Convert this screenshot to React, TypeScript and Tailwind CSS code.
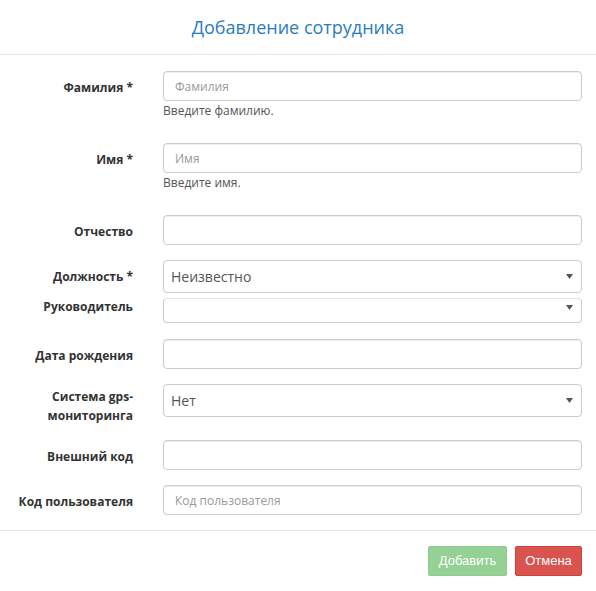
import React from "react";

function Caret() {
  return (
    <svg width="7" height="5" viewBox="0 0 7 5" className="shrink-0">
      <path d="M0 0 L7 0 L3.5 5 Z" fill="#555" />
    </svg>
  );
}

function Label({ children, pad = "pt-[7px]" }: { children: React.ReactNode; pad?: string }) {
  return (
    <div
      className={`w-[148px] shrink-0 pr-[15px] text-right text-[12px] leading-[19px] font-bold text-[#333] ${pad}`}
    >
      {children}
    </div>
  );
}

function TextInput({ placeholder }: { placeholder?: string }) {
  return (
    <input
      type="text"
      placeholder={placeholder}
      className="block w-full h-[30px] px-[11px] rounded-[4px] border border-[#ccc] bg-white text-[12px] text-[#555] outline-none shadow-[inset_0_1px_1px_rgba(0,0,0,0.075)] placeholder:text-[#999]"
    />
  );
}

function Select({ value, h = "h-[33px]", align = "items-center" }: { value?: string; h?: string; align?: string }) {
  return (
    <div
      className={`flex ${align} justify-between w-full ${h} pl-[7px] pr-[8px] rounded-[4px] border border-[#ccc] bg-white text-[14px] text-[#555]`}
    >
      <span>{value}</span>
      <Caret />
    </div>
  );
}

export default function App() {
  return (
    <div className="w-[596px] h-[591px] bg-white font-['Open_Sans',sans-serif]">
      <div className="h-[55px] flex items-center justify-center border-b border-[#e5e5e5]">
        <h4 className="text-[18px] text-[#2b7bc3]">Добавление сотрудника</h4>
      </div>

      <div className="pt-[16px]">
        <div className="flex mb-[24px]">
          <Label>Фамилия *</Label>
          <div className="flex-1 pl-[15px] pr-[14px]">
            <TextInput placeholder="Фамилия" />
            <p className="mt-[1px] text-[12px] leading-[17px] text-[#555]">Введите фамилию.</p>
          </div>
        </div>

        <div className="flex mb-[24px]">
          <Label>Имя *</Label>
          <div className="flex-1 pl-[15px] pr-[14px]">
            <TextInput placeholder="Имя" />
            <p className="mt-[1px] text-[12px] leading-[17px] text-[#555]">Введите имя.</p>
          </div>
        </div>

        <div className="flex mb-[15px]">
          <Label>Отчество</Label>
          <div className="flex-1 pl-[15px] pr-[14px]">
            <TextInput />
          </div>
        </div>

        <div className="flex">
          <Label>Должность *</Label>
          <div className="flex-1 pl-[15px] pr-[14px]">
            <Select value="Неизвестно" />
          </div>
        </div>

        <div className="flex mb-[16px]">
          <Label pad="pt-[4px]">Руководитель</Label>
          <div className="flex-1 pl-[15px] pr-[14px] pt-[5px]">
            <Select h="h-[25px] pt-[6px] border-t-[#e3e3e3]" align="items-start" />
          </div>
        </div>

        <div className="flex mb-[15px]">
          <Label>Дата рождения</Label>
          <div className="flex-1 pl-[15px] pr-[14px]">
            <TextInput />
          </div>
        </div>

        <div className="flex mb-[15px]">
          <Label pad="pt-[3px]">
            Система gps-
            <br />
            мониторинга
          </Label>
          <div className="flex-1 pl-[15px] pr-[14px]">
            <Select value="Нет" />
          </div>
        </div>

        <div className="flex mb-[15px]">
          <Label>Внешний код</Label>
          <div className="flex-1 pl-[15px] pr-[14px]">
            <TextInput />
          </div>
        </div>

        <div className="flex mb-[15px]">
          <Label>Код пользователя</Label>
          <div className="flex-1 pl-[15px] pr-[14px]">
            <TextInput placeholder="Код пользователя" />
          </div>
        </div>
      </div>

      <div className="flex justify-end gap-[8px] border-t border-[#e5e5e5] pt-[15px] pr-[14px]">
        <button className="w-[79px] h-[30px] rounded-[2px] border border-[#8fcc8f] bg-[#95d195] text-white text-[13px] font-['Liberation_Sans',sans-serif]">
          Добавить
        </button>
        <button className="w-[67px] h-[30px] rounded-[2px] border border-[#d43f3a] bg-[#d9534f] text-white text-[13px] font-['Liberation_Sans',sans-serif]">
          Отмена
        </button>
      </div>
    </div>
  );
}
